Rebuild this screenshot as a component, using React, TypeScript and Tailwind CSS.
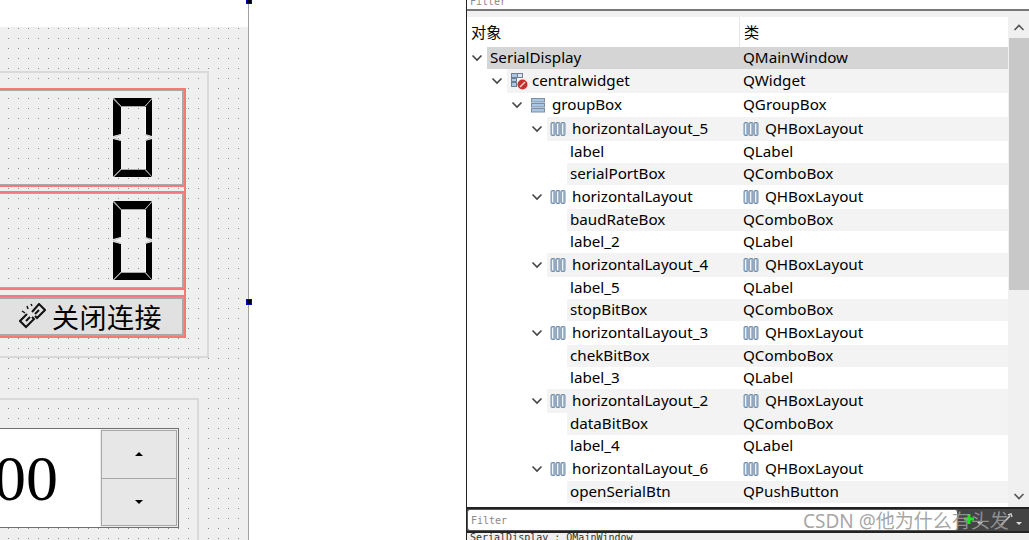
const dots =
  "bg-[#efefef] bg-[radial-gradient(circle_at_0.5px_0.5px,#8c8c8c_0.6px,transparent_0.7px)] bg-[size:10px_10px]";

function LcdZero() {
  return (
    <svg width="40" height="80" viewBox="0 0 40 80" className="shrink-0">
      <g fill="#000">
        <polygon points="1,0 39,0 32,8 8,8" />
        <polygon points="0,1 8,9 8,36 0,38" />
        <polygon points="39,1 39,38 32,36 32,9" />
        <polygon points="0,41 8,43 8,71 0,79" />
        <polygon points="39,41 39,79 32,71 32,43" />
        <polygon points="1,79 8,72 32,72 39,79" />
      </g>
      <g stroke="#a8a8a8" strokeWidth="1" fill="none">
        <path d="M0 0 8 8M39 1 32 8M0 79 8 71M39 79 32 71M8 8.500H32M8 71.500H32" />
      </g>
      <path d="M0 39.500 8 36.500M0 39.500 8 42.500M39 39.500 32 36.500M39 39.500 32 42.500" stroke="#c8c8c8" strokeWidth="1" fill="none" />
      <path d="M32.500 9V36M32.500 43V71" stroke="#fff" strokeWidth="1" fill="none" />
    </svg>
  );
}

function BrokenLink() {
  return (
    <svg width="27" height="27" viewBox="0 0 27 27" fill="none" stroke="#111" strokeWidth="2" className="shrink-0">
      <path d="M8 11 1 18l6 6 8-8-2-2" />
      <path d="M11 14 7 18" />
      <path d="M13 9l7-8 6 6-8 8-2-2" />
      <path d="M16 11l4-4" />
      <path d="M3 8l3 2M8 3l1 3M12 1l1 2" strokeWidth="1.500" />
    </svg>
  );
}

function Chevron() {
  return (
    <svg width="12" height="8" viewBox="0 0 12 8" fill="none" stroke="#444" strokeWidth="1.600">
      <path d="M1.500 1.500 6 6l4.500-4.500" />
    </svg>
  );
}

function LayoutIcon() {
  return (
    <svg width="16" height="16" viewBox="0 0 16 16" className="shrink-0">
      {[1, 6, 11].map((x) => (
        <g key={x}>
          <rect x={x} y="1.500" width="4" height="13" rx="1" fill="#a9c0d8" stroke="#7890a8" />
          <path d={`M${x + 1.500} 3V13`} stroke="#eef4fa" />
        </g>
      ))}
    </svg>
  );
}

function GroupIcon() {
  return (
    <svg width="16" height="16" viewBox="0 0 16 16" className="shrink-0">
      {[2, 7, 12].map((y) => (
        <rect key={y} x="1.500" y={y - 0.500} width="13" height="3.500" fill="#a9c6e4" stroke="#7b8ea3" />
      ))}
    </svg>
  );
}

function WidgetIcon() {
  return (
    <svg width="18" height="18" viewBox="0 0 18 18" className="shrink-0">
      <rect x="1.500" y="1.500" width="11" height="4" fill="#a9c6e4" stroke="#6d7f92" />
      <rect x="1.500" y="6.500" width="5" height="3" fill="#a9c6e4" stroke="#6d7f92" />
      <rect x="1.500" y="10.500" width="5" height="4" fill="#a9c6e4" stroke="#6d7f92" />
      <rect x="7.500" y="1.500" width="5" height="4" fill="#dce6f0" stroke="#6d7f92" />
      <circle cx="12.500" cy="12.500" r="5" fill="#c5312c" />
      <path d="M10 15l5-5" stroke="#f3d0ce" strokeWidth="1.500" />
    </svg>
  );
}

type Row = {
  name: string;
  kind: string;
  level: 0 | 1 | 2 | 3 | 4;
  icon?: "layout" | "group" | "widget";
  tall?: boolean;
  alt?: boolean;
  selected?: boolean;
};

const rows: Row[] = [
  { name: "SerialDisplay", kind: "QMainWindow", level: 0, selected: true },
  { name: "centralwidget", kind: "QWidget", level: 1, icon: "widget", tall: true, alt: true },
  { name: "groupBox", kind: "QGroupBox", level: 2, icon: "group", tall: true },
  { name: "horizontalLayout_5", kind: "QHBoxLayout", level: 3, icon: "layout", tall: true, alt: true },
  { name: "label", kind: "QLabel", level: 4 },
  { name: "serialPortBox", kind: "QComboBox", level: 4, alt: true },
  { name: "horizontalLayout", kind: "QHBoxLayout", level: 3, icon: "layout", tall: true },
  { name: "baudRateBox", kind: "QComboBox", level: 4, alt: true },
  { name: "label_2", kind: "QLabel", level: 4 },
  { name: "horizontalLayout_4", kind: "QHBoxLayout", level: 3, icon: "layout", tall: true, alt: true },
  { name: "label_5", kind: "QLabel", level: 4 },
  { name: "stopBitBox", kind: "QComboBox", level: 4, alt: true },
  { name: "horizontalLayout_3", kind: "QHBoxLayout", level: 3, icon: "layout", tall: true },
  { name: "chekBitBox", kind: "QComboBox", level: 4, alt: true },
  { name: "label_3", kind: "QLabel", level: 4 },
  { name: "horizontalLayout_2", kind: "QHBoxLayout", level: 3, icon: "layout", tall: true, alt: true },
  { name: "dataBitBox", kind: "QComboBox", level: 4, alt: true },
  { name: "label_4", kind: "QLabel", level: 4 },
  { name: "horizontalLayout_6", kind: "QHBoxLayout", level: 3, icon: "layout", tall: true },
  { name: "openSerialBtn", kind: "QPushButton", level: 4, alt: true },
  { name: "closeSerialBtn", kind: "QPushButton", level: 4 },
];

const indent = ["w-[20px]", "w-[40px]", "w-[60px]", "w-[80px]", "w-[100px]"];

function TreeRow({ row }: { row: Row }) {
  const bg = row.selected ? "bg-[#d5d5d5]" : row.alt ? "bg-[#f3f3f3]" : "bg-white";
  return (
    <div className={`flex shrink-0 ${row.tall ? "h-[24px]" : "h-[22px]"}`}>
      <div className="flex w-[273px] shrink-0">
        <div className={`flex shrink-0 items-center justify-end ${indent[row.level]}`}>
          {row.level < 4 && (
            <div className="flex w-[20px] justify-center">
              <Chevron />
            </div>
          )}
        </div>
        <div className={`flex flex-1 items-center pb-[2px] ${bg}`}>
          {row.icon ? (
            <div className="flex w-[25px] shrink-0 pl-[3px] pt-[2px]">
              {row.icon === "layout" && <LayoutIcon />}
              {row.icon === "group" && <GroupIcon />}
              {row.icon === "widget" && <WidgetIcon />}
            </div>
          ) : (
            <div className="w-[3px] shrink-0" />
          )}
          <span>{row.name}</span>
        </div>
      </div>
      <div className={`flex w-[268px] shrink-0 items-center pb-[2px] pl-[3px] ${bg}`}>
        {row.kind === "QHBoxLayout" && (
          <div className="mr-[5px] flex shrink-0 pt-[2px]">
            <LayoutIcon />
          </div>
        )}
        <span className={row.kind === "QHBoxLayout" ? "ml-[1px]" : ""}>{row.kind}</span>
      </div>
    </div>
  );
}

function LcdBlock() {
  return (
    <div className="h-[99px] shrink-0 border-y-2 border-r-2 border-[#f67878]">
      <div className="flex h-[95px] items-center justify-end border-y border-r-2 border-y-[#a8a8a8] border-r-[#a8a8a8] pr-[29px]">
        <LcdZero />
      </div>
    </div>
  );
}

export default function App() {
  return (
    <div className="relative flex h-[540px] w-[1029px] overflow-hidden bg-white font-['Noto_Sans','Noto_Sans_CJK_SC',sans-serif] text-[15.2px] text-black">
      <div className="relative flex h-full w-[249px] shrink-0 flex-col border-r border-[#a0a0a0]">
        <div className="h-[27px] shrink-0 bg-white" />
        <div className={`flex-1 overflow-hidden bg-[position:8px_1px] ${dots}`}>
          <div className="mt-[44px] h-[287px] w-[209px] border-y-2 border-r-2 border-[#d9d9d9] pt-[15px]">
            <div className="flex w-[186px] flex-col">
              <LcdBlock />
              <div className="h-[4px] shrink-0 border-r-2 border-[#f67878]" />
              <LcdBlock />
              <div className="h-[5px] shrink-0 border-r-2 border-[#f67878]" />
              <div className="h-[43px] shrink-0 border-y-2 border-r-2 border-[#f67878]">
                <div className="flex h-[39px] items-center gap-[6px] border-2 border-l-0 border-[#a8a8a8] bg-[#e1e1e1] pl-[19px] font-['Noto_Sans_CJK_SC',serif] text-[27px] leading-none text-black">
                  <BrokenLink />
                  <span className="tracking-[0.5px]">关闭连接</span>
                </div>
              </div>
            </div>
          </div>
          <div className="mt-[40px] h-[160px] w-[199px] border-t-2 border-r-2 border-[#d9d9d9] pt-[28px]">
            <div className="flex h-[100px] w-[179px] border-y border-r border-[#707070] bg-white">
              <div className="flex min-w-0 flex-1 items-center justify-end pr-[42px] pt-[2px] font-['Liberation_Serif',serif] text-[64px] leading-none text-black">
                00
              </div>
              <div className="flex w-[78px] shrink-0 flex-col bg-[#ececec] p-px">
                <div className="flex flex-1 flex-col border border-[#a8a8a8] bg-[#e7e7e7]">
                  <div className="flex flex-1 items-center justify-center border-b border-[#a8a8a8]">
                    <div className="h-0 w-0 border-x-[4px] border-b-[4px] border-x-transparent border-b-black" />
                  </div>
                  <div className="flex flex-1 items-center justify-center">
                    <div className="h-0 w-0 border-x-[4px] border-t-[4px] border-x-transparent border-t-black" />
                  </div>
                </div>
              </div>
            </div>
          </div>
        </div>
        <div className="absolute -right-[4px] -top-[2px] h-[6px] w-[6px] border-[1.5px] border-[#0000c8] bg-black" />
        <div className="absolute -right-[4px] top-[299px] h-[6px] w-[6px] border-[1.5px] border-[#0000c8] bg-black" />
      </div>

      <div className="w-[217px] shrink-0" />

      <div className="flex h-full w-[563px] shrink-0 flex-col border-l border-[#222] bg-[#f0f0f0]">
        <div className="flex h-[11px] shrink-0 items-end overflow-hidden border-b-2 border-[#777] bg-white pl-[3px] font-['DejaVu_Sans_Mono',monospace] text-[10px] leading-[10px] text-[#888]">
          <span className="-translate-y-[2px]">Filter</span>
        </div>
        <div className="flex min-h-0 flex-1 pt-[6px]">
          <div className="flex w-[541px] shrink-0 flex-col overflow-hidden bg-white">
            <div className="flex h-[30px] shrink-0 items-center">
              <div className="w-[272px] pl-[4px]">对象</div>
              <div className="h-full border-l border-[#e5e5e5] pl-[4px] leading-[30px]">类</div>
            </div>
            {rows.map((row) => (
              <TreeRow key={row.name} row={row} />
            ))}
          </div>
          <div className="flex w-[21px] flex-col items-center bg-[#f0f0f0]">
            <svg width="12" height="21" viewBox="0 0 12 21" fill="none" stroke="#555" strokeWidth="1.600" className="shrink-0">
              <path d="M1.500 13 6 8.500l4.500 4.500" />
            </svg>
            <div className="ml-[1px] h-[252px] w-[20px] bg-[#c8c8c8]" />
            <div className="flex-1" />
            <svg width="12" height="20" viewBox="0 0 12 20" fill="none" stroke="#555" strokeWidth="1.600" className="shrink-0">
              <path d="M1.500 7 6 11.500 10.500 7" />
            </svg>
          </div>
        </div>
        <div className="flex h-[26px] shrink-0 border-y-2 border-[#222] bg-[#444]">
          <div className="flex w-[491px] items-center rounded-[3px] border border-[#555] bg-white pl-[3px] font-['DejaVu_Sans_Mono',monospace] text-[10px] text-[#888]">
            Filter
          </div>
          <div className="flex flex-1 items-center justify-between pl-[5px] pr-[4px]">
            <svg width="26" height="14" viewBox="0 0 26 14" className="shrink-0">
              <path d="M6 1v10M1 6h10" stroke="#22e022" strokeWidth="3" />
              <path d="M14 9h6l-3 3z" fill="#ddd" />
            </svg>
            <svg width="26" height="14" viewBox="0 0 26 14" fill="none" className="shrink-0">
              <path d="M2 12 11 3M9 2l3-1 1 3" stroke="#ccc" strokeWidth="1.500" />
              <path d="M17 9h6l-3 3z" fill="#ddd" />
            </svg>
          </div>
        </div>
        <div className="h-[7px] shrink-0 overflow-hidden pl-[3px] font-['DejaVu_Sans_Mono',monospace] text-[10px] leading-[10px] text-[#333]">
          SerialDisplay : QMainWindow
        </div>
      </div>

      <div className="absolute left-[803px] top-[509px] text-[19px] leading-[24px] text-[#9a9a9a]/90">CSDN @他为什么有头发</div>
    </div>
  );
}
